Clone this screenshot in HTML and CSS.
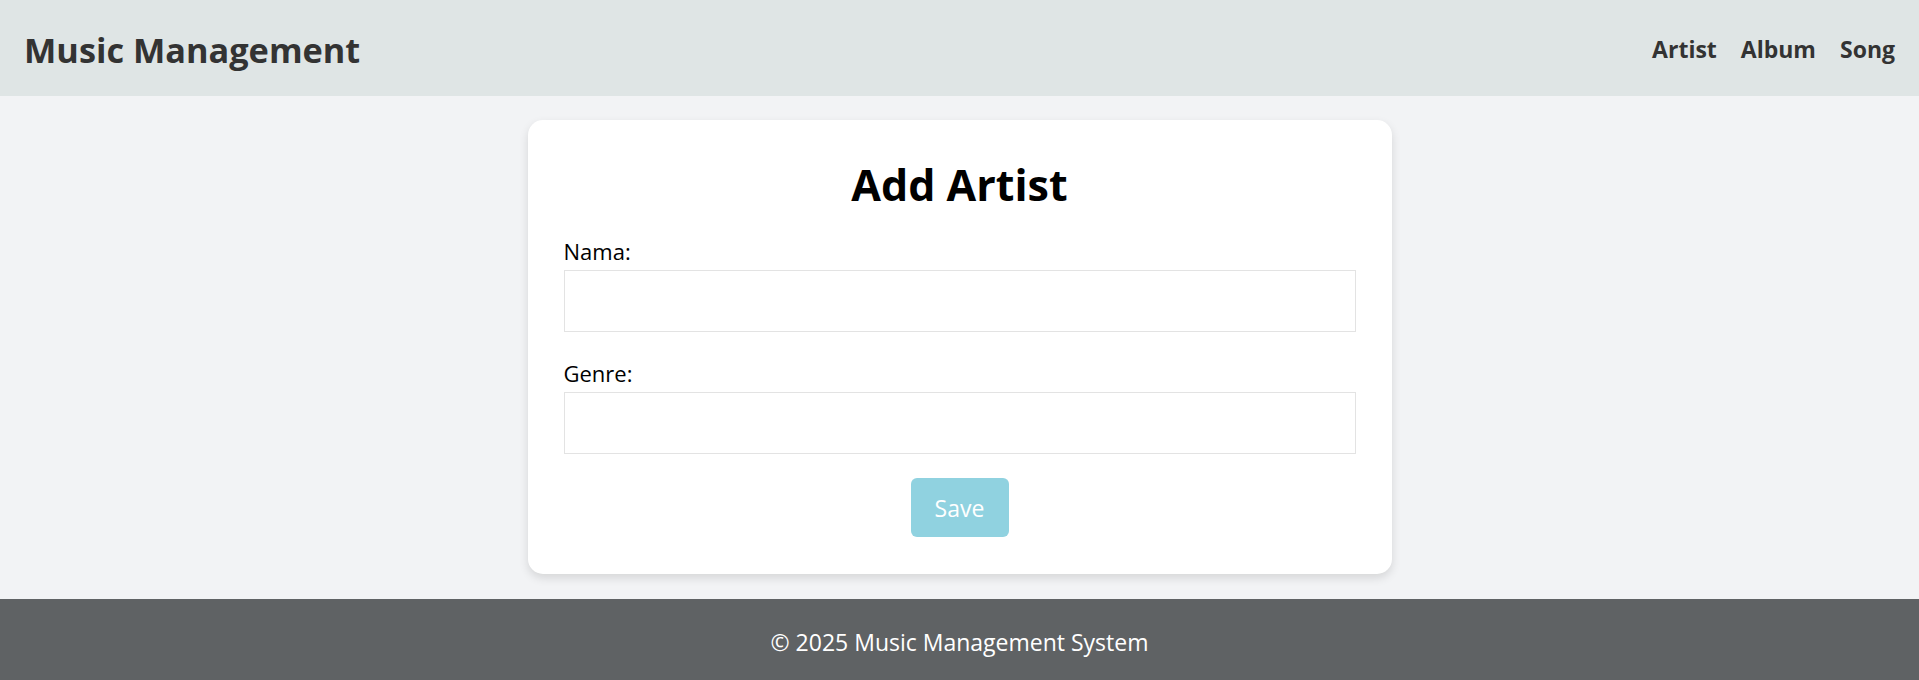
FILE: index.html
```html
<!DOCTYPE html>
<html lang="en">
<head>
<meta charset="utf-8">
<title>Music Management</title>
<link rel="stylesheet" href="styles.css">
</head>
<body>
<header class="topbar">
  <div class="brand">Music Management</div>
  <nav class="nav">
    <a href="#" class="nav-link">Artist</a>
    <a href="#" class="nav-link">Album</a>
    <a href="#" class="nav-link">Song</a>
  </nav>
</header>
<main class="main">
  <section class="card">
    <h2 class="card-title">Add Artist</h2>
    <form class="form">
      <div class="field">
        <label class="label" for="nama">Nama:</label>
        <input class="input" id="nama" type="text">
      </div>
      <div class="field">
        <label class="label" for="genre">Genre:</label>
        <input class="input" id="genre" type="text">
      </div>
      <div class="actions">
        <button type="button" class="btn">Save</button>
      </div>
    </form>
  </section>
</main>
<footer class="footer">© 2025 Music Management System</footer>
</body>
</html>
```
FILE: styles.css
```css
* { box-sizing: border-box; }
html, body { margin: 0; padding: 0; }
body {
  font-family: "Open Sans", "Noto Sans", sans-serif;
  background: #f2f3f5;
  color: #000;
  min-height: 100vh;
  display: flex;
  flex-direction: column;
}
.topbar {
  height: 96px;
  background: #dfe5e5;
  display: flex;
  align-items: center;
  justify-content: space-between;
  padding: 2px 24px 0 24px;
}
.brand {
  font-size: 34.3px;
  font-weight: 700;
  color: #333;
}
.nav {
  display: flex;
  gap: 24px;
}
.nav-link {
  font-size: 23px;
  font-weight: 700;
  color: #333;
  text-decoration: none;
}
.main {
  flex: 1;
  padding: 24px 0 25px;
  display: flex;
  justify-content: center;
  align-items: flex-start;
}
.card {
  width: 864px;
  background: #fff;
  border-radius: 15px;
  box-shadow: 0 4px 10px rgba(0,0,0,0.12);
  padding: 36px 36px 37px;
}
.card-title {
  margin: 0 0 22px;
  text-align: center;
  font-size: 43px;
  font-weight: 700;
  line-height: 57px;
}
.form {
  display: flex;
  flex-direction: column;
}
.field {
  display: flex;
  flex-direction: column;
  margin-bottom: 24.5px;
}
.label {
  font-size: 22px;
  line-height: 33px;
  margin-bottom: 2px;
}
.input {
  height: 62px;
  border: 1px solid #e3e3e3;
  background: #fff;
  font-size: 22px;
  padding: 0 12px;
}
.actions {
  display: flex;
  justify-content: center;
}
.btn {
  width: 98px;
  height: 59px;
  border: none;
  border-radius: 6px;
  background: #90d2e0;
  color: #fff;
  font-family: inherit;
  font-size: 23px;
}
.footer {
  background: #5f6264;
  color: #fff;
  text-align: center;
  font-size: 23px;
  height: 82px;
  padding-top: 3px;
  display: flex;
  align-items: center;
  justify-content: center;
}
```
